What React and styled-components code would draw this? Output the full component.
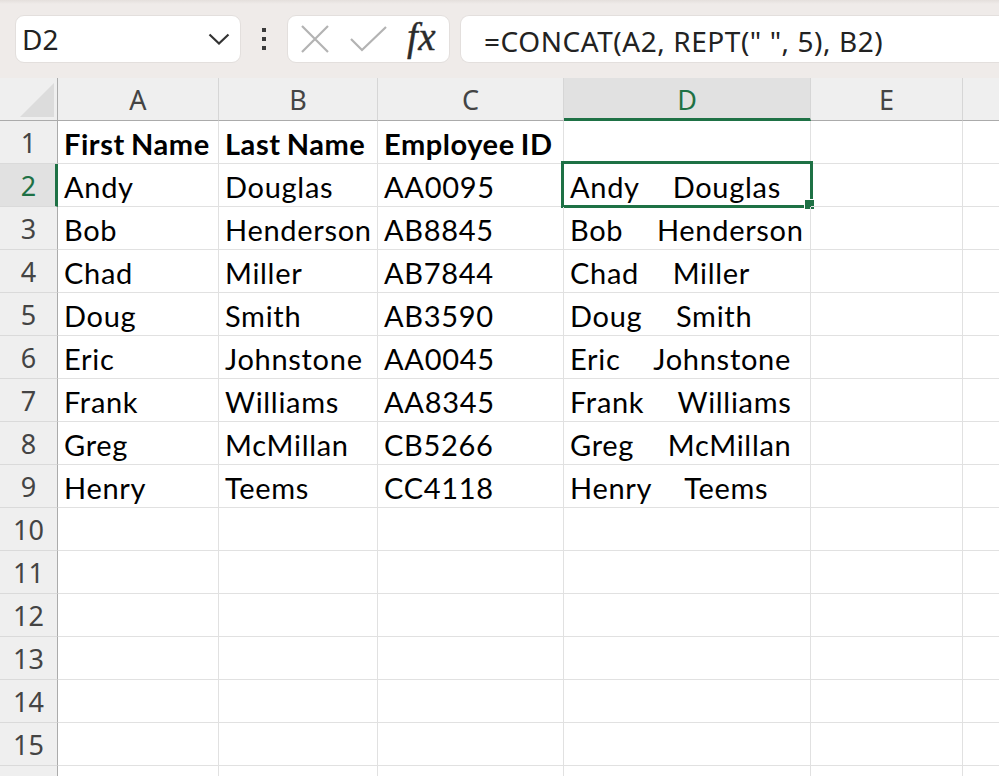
import React from "react";
import styled, { createGlobalStyle } from "styled-components";

const GREEN = "#1e7145";

const columns = [
  { key: "A", width: 161 },
  { key: "B", width: 159 },
  { key: "C", width: 186 },
  { key: "D", width: 247 },
  { key: "E", width: 152 },
  { key: "F", width: 120 },
];

const people = [
  ["Andy", "Douglas", "AA0095"],
  ["Bob", "Henderson", "AB8845"],
  ["Chad", "Miller", "AB7844"],
  ["Doug", "Smith", "AB3590"],
  ["Eric", "Johnstone", "AA0045"],
  ["Frank", "Williams", "AA8345"],
  ["Greg", "McMillan", "CB5266"],
  ["Henry", "Teems", "CC4118"],
];

// rows of the sheet, row 1 is the header line of the data
const rows = [
  { cells: ["First Name", "Last Name", "Employee ID", "", "", ""], bold: true },
  ...people.map(([first, last, id]) => ({
    cells: [first, last, id, `${first}     ${last}`, "", ""],
  })),
  ...Array.from({ length: 7 }, () => ({ cells: ["", "", "", "", "", ""] })),
];

const GlobalStyle = createGlobalStyle`
  html, body {
    margin: 0;
    padding: 0;
    background: #ffffff;
    overflow: hidden;
  }
  * {
    box-sizing: border-box;
  }
`;

const Window = styled.div`
  width: 999px;
  height: 776px;
  display: flex;
  flex-direction: column;
  overflow: hidden;
  font-family: "Noto Sans", "Open Sans", sans-serif;
`;

const Toolbar = styled.div`
  height: 78px;
  flex-shrink: 0;
  display: flex;
  align-items: center;
  gap: 10px;
  padding: 0 0 0 15px;
  background: linear-gradient(#e4dfdc 0px, #efebe9 4px, #efebe9 100%);
`;

const Field = styled.div`
  height: 48px;
  background: #ffffff;
  border: 1px solid #e3dfdd;
  border-radius: 9px;
  display: flex;
  align-items: center;
`;

const NameBox = styled(Field)`
  width: 226px;
  justify-content: space-between;
  padding: 0 10px 0 6px;
  font-size: 28px;
  color: #222222;
`;

const Kebab = styled.div`
  width: 26px;
  display: flex;
  flex-direction: column;
  align-items: center;
  gap: 4.5px;

  span {
    width: 4.5px;
    height: 4.5px;
    background: #3a3a3a;
  }
`;

const FxBox = styled(Field)`
  width: 163px;
  padding: 0 8px 0 12px;
  gap: 20px;
`;

const FxLabel = styled.span`
  font-family: "Liberation Serif", "DejaVu Serif", serif;
  font-style: italic;
  font-size: 39px;
  color: #2b2b2b;
  letter-spacing: 0.5px;
  line-height: 1;
  padding-bottom: 5px;
  -webkit-text-stroke: 0.4px #2b2b2b;
`;

const FormulaInput = styled(Field)`
  flex: 1;
  padding: 3px 0 0 23px;
  border-right: none;
  border-radius: 9px 0 0 9px;
  font-size: 28px;
  letter-spacing: 0.55px;
  color: #222222;
  white-space: pre;
`;

const Sheet = styled.div`
  display: grid;
  grid-template-columns: 58px ${columns.map((c) => `${c.width}px`).join(" ")};
  grid-auto-rows: 43px;
`;

const HeaderCell = styled.div`
  display: flex;
  align-items: center;
  justify-content: center;
  background: ${(p) => (p.$active ? "#e1e1e1" : "#efefef")};
  color: ${(p) => (p.$active ? GREEN : "#444444")};
  font-size: 27px;
  padding-top: ${(p) => (p.$active ? "3px" : "1px")};
  border-right: 1px solid #d6d6d6;
  border-bottom: ${(p) => (p.$active ? `3px solid ${GREEN}` : "1px solid #ababab")};
`;

const Corner = styled.div`
  position: relative;
  background: #efefef;
  border-right: 1px solid #ababab;
  border-bottom: 1px solid #ababab;

  &::after {
    content: "";
    position: absolute;
    right: 3px;
    bottom: 3px;
    width: 34px;
    height: 34px;
    background: #dcdcdc;
    clip-path: polygon(100% 0, 100% 100%, 0 100%);
  }
`;

const RowHeader = styled.div`
  display: flex;
  align-items: center;
  justify-content: center;
  background: ${(p) => (p.$active ? "#e1e1e1" : "#efefef")};
  color: ${(p) => (p.$active ? GREEN : "#444444")};
  font-size: 27px;
  padding-top: 1px;
  border-bottom: 1px solid #dadada;
  border-right: ${(p) => (p.$active ? `3px solid ${GREEN}` : "1px solid #ababab")};
  padding-left: ${(p) => (p.$active ? "2px" : "0")};
`;

const Cell = styled.div`
  position: relative;
  display: flex;
  align-items: center;
  padding: 3px 0 0 6px;
  border-right: 1px solid #e1e1e1;
  border-bottom: 1px solid #e1e1e1;
  font-family: "Lato", "Liberation Sans", sans-serif;
  font-size: 29px;
  letter-spacing: ${(p) => (p.$bold ? "0.55px" : "0.7px")};
  word-spacing: -1.4px;
  font-weight: ${(p) => (p.$bold ? 700 : 400)};
  color: #000000;
  white-space: pre;
`;

const Selection = styled.div`
  position: absolute;
  left: -3px;
  top: -3px;
  right: -3px;
  bottom: -2px;
  border: 3px solid ${GREEN};
  pointer-events: none;

  &::after {
    content: "";
    position: absolute;
    right: -5px;
    bottom: -5px;
    width: 9px;
    height: 9px;
    background: ${GREEN};
    border: 1px solid #ffffff;
  }
`;

const Chevron = () => (
  <svg width="22" height="12" viewBox="0 0 22 12" fill="none">
    <path d="M1.5 1.5 L11 10.5 L20.5 1.5" stroke="#333" strokeWidth="2.2" />
  </svg>
);

const CancelIcon = () => (
  <svg width="30" height="28" viewBox="0 0 30 28" fill="none">
    <path d="M2 1 L28 27 M28 1 L2 27" stroke="#b3b3b3" strokeWidth="2.2" />
  </svg>
);

const CheckIcon = () => (
  <svg width="37" height="26" viewBox="0 0 37 26" fill="none">
    <path d="M1 13 L12 24 L36 1" stroke="#b3b3b3" strokeWidth="2.2" />
  </svg>
);

export default function App() {
  return (
    <Window>
      <GlobalStyle />
      <Toolbar>
        <NameBox>
          <span>D2</span>
          <Chevron />
        </NameBox>
        <Kebab>
          <span />
          <span />
          <span />
        </Kebab>
        <FxBox>
          <CancelIcon />
          <CheckIcon />
          <FxLabel>fx</FxLabel>
        </FxBox>
        <FormulaInput>=CONCAT(A2, REPT(" ", 5), B2)</FormulaInput>
      </Toolbar>
      <Sheet>
        <Corner />
        {columns.map((c) => (
          <HeaderCell key={c.key} $active={c.key === "D"}>
            {c.key === "F" ? "" : c.key}
          </HeaderCell>
        ))}
        {rows.map((row, r) => (
          <React.Fragment key={r}>
            {/* the 16th row only shows its top edge, so no number */}
            <RowHeader $active={r === 1}>{r < 15 ? r + 1 : ""}</RowHeader>
            {row.cells.map((text, c) => (
              <Cell key={c} $bold={row.bold}>
                {text}
                {r === 1 && c === 3 && <Selection />}
              </Cell>
            ))}
          </React.Fragment>
        ))}
      </Sheet>
    </Window>
  );
}
